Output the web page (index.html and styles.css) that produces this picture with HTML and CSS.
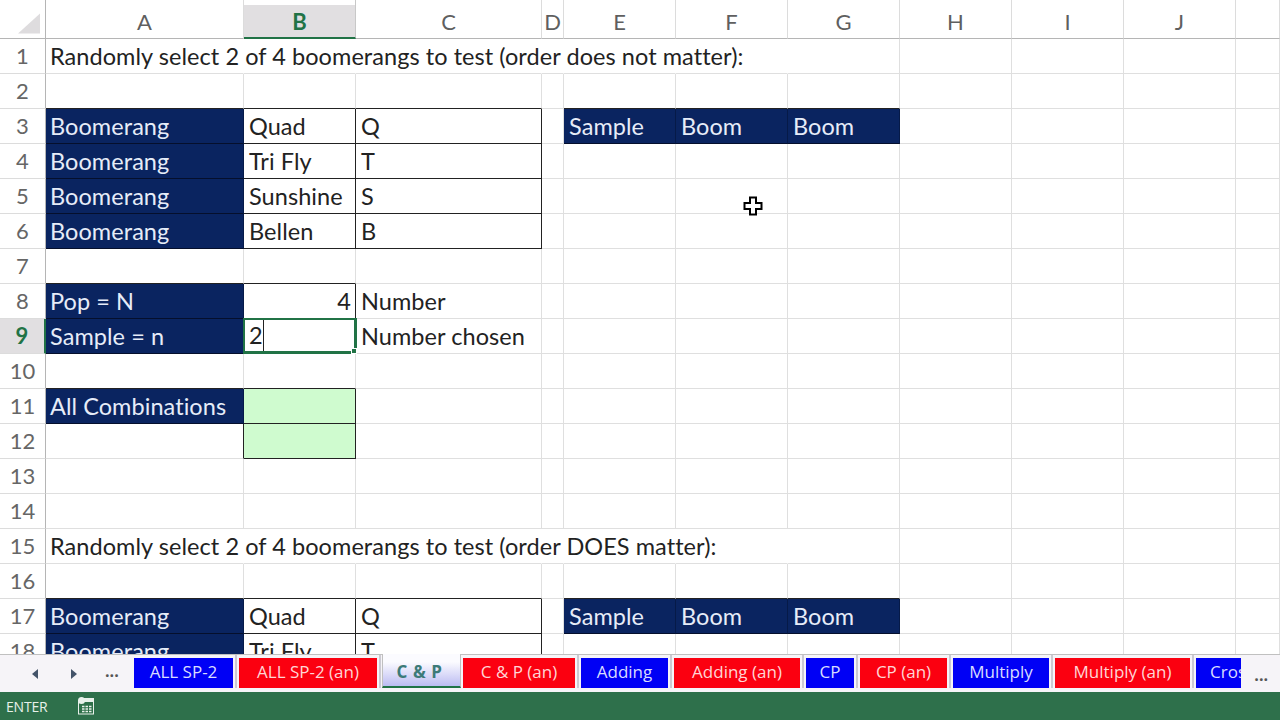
FILE: index.html
```html
<!DOCTYPE html>
<html lang="en">
<head>
<meta charset="utf-8">
<title>C &amp; P</title>
<link rel="stylesheet" href="styles.css">
</head>
<body>
<div class="app">
  <div class="sheet">
    <div class="row head-row">
      <div class="corner"><svg class="corner-mark" viewBox="0 0 24 22"><polygon points="24,0 24,22 0,22" /></svg></div>
      <div class="col">A</div><div class="col col-sel">B</div><div class="col">C</div><div class="col">D</div><div class="col">E</div><div class="col">F</div><div class="col">G</div><div class="col">H</div><div class="col">I</div><div class="col">J</div><div class="col"></div>
    </div>

    <div class="row">
      <div class="rh">1</div>
      <div class="c ca c-nr"><span class="overflow">Randomly select 2 of 4 boomerangs to test (order does not matter):</span></div><div class="c c-nr"></div><div class="c c-nr"></div><div class="c c-nr"></div><div class="c c-nr"></div><div class="c c-nr"></div><div class="c"></div><div class="c"></div><div class="c"></div><div class="c"></div><div class="c"></div>
    </div>
    <div class="row">
      <div class="rh">2</div>
      <div class="c b-b"></div><div class="c b-b"></div><div class="c b-b"></div><div class="c"></div><div class="c b-b"></div><div class="c b-b"></div><div class="c b-b"></div><div class="c"></div><div class="c"></div><div class="c"></div><div class="c"></div>
    </div>
    <div class="row">
      <div class="rh">3</div>
      <div class="c ca navy">Boomerang</div><div class="c box">Quad</div><div class="c box">Q</div><div class="c"></div><div class="c navy">Sample</div><div class="c navy">Boom</div><div class="c navy">Boom</div><div class="c"></div><div class="c"></div><div class="c"></div><div class="c"></div>
    </div>
    <div class="row">
      <div class="rh">4</div>
      <div class="c ca navy">Boomerang</div><div class="c box">Tri Fly</div><div class="c box">T</div><div class="c"></div><div class="c"></div><div class="c"></div><div class="c"></div><div class="c"></div><div class="c"></div><div class="c"></div><div class="c"></div>
    </div>
    <div class="row">
      <div class="rh">5</div>
      <div class="c ca navy">Boomerang</div><div class="c box">Sunshine</div><div class="c box">S</div><div class="c"></div><div class="c"></div><div class="c"></div><div class="c"></div><div class="c"></div><div class="c"></div><div class="c"></div><div class="c"></div>
    </div>
    <div class="row">
      <div class="rh">6</div>
      <div class="c ca navy">Boomerang</div><div class="c box">Bellen</div><div class="c box">B</div><div class="c"></div><div class="c"></div><div class="c"></div><div class="c"></div><div class="c"></div><div class="c"></div><div class="c"></div><div class="c"></div>
    </div>
    <div class="row">
      <div class="rh">7</div>
      <div class="c b-b"></div><div class="c b-b"></div><div class="c"></div><div class="c"></div><div class="c"></div><div class="c"></div><div class="c"></div><div class="c"></div><div class="c"></div><div class="c"></div><div class="c"></div>
    </div>
    <div class="row">
      <div class="rh">8</div>
      <div class="c ca navy">Pop = N</div><div class="c box num">4</div><div class="c">Number</div><div class="c"></div><div class="c"></div><div class="c"></div><div class="c"></div><div class="c"></div><div class="c"></div><div class="c"></div><div class="c"></div>
    </div>
    <div class="row">
      <div class="rh rh-sel">9</div>
      <div class="c ca navy">Sample = n</div><div class="c active"><span class="entry">2</span><span class="handle"></span></div><div class="c">Number chosen</div><div class="c"></div><div class="c"></div><div class="c"></div><div class="c"></div><div class="c"></div><div class="c"></div><div class="c"></div><div class="c"></div>
    </div>
    <div class="row">
      <div class="rh">10</div>
      <div class="c b-b"></div><div class="c b-b"></div><div class="c"></div><div class="c"></div><div class="c"></div><div class="c"></div><div class="c"></div><div class="c"></div><div class="c"></div><div class="c"></div><div class="c"></div>
    </div>
    <div class="row">
      <div class="rh">11</div>
      <div class="c ca navy">All Combinations</div><div class="c box mint"></div><div class="c"></div><div class="c"></div><div class="c"></div><div class="c"></div><div class="c"></div><div class="c"></div><div class="c"></div><div class="c"></div><div class="c"></div>
    </div>
    <div class="row">
      <div class="rh">12</div>
      <div class="c b-r"></div><div class="c box mint"></div><div class="c"></div><div class="c"></div><div class="c"></div><div class="c"></div><div class="c"></div><div class="c"></div><div class="c"></div><div class="c"></div><div class="c"></div>
    </div>
    <div class="row">
      <div class="rh">13</div>
      <div class="c"></div><div class="c"></div><div class="c"></div><div class="c"></div><div class="c"></div><div class="c"></div><div class="c"></div><div class="c"></div><div class="c"></div><div class="c"></div><div class="c"></div>
    </div>
    <div class="row">
      <div class="rh">14</div>
      <div class="c"></div><div class="c"></div><div class="c"></div><div class="c"></div><div class="c"></div><div class="c"></div><div class="c"></div><div class="c"></div><div class="c"></div><div class="c"></div><div class="c"></div>
    </div>
    <div class="row">
      <div class="rh">15</div>
      <div class="c ca c-nr"><span class="overflow">Randomly select 2 of 4 boomerangs to test (order DOES matter):</span></div><div class="c c-nr"></div><div class="c c-nr"></div><div class="c c-nr"></div><div class="c c-nr"></div><div class="c c-nr"></div><div class="c"></div><div class="c"></div><div class="c"></div><div class="c"></div><div class="c"></div>
    </div>
    <div class="row">
      <div class="rh">16</div>
      <div class="c b-b"></div><div class="c b-b"></div><div class="c b-b"></div><div class="c"></div><div class="c b-b"></div><div class="c b-b"></div><div class="c b-b"></div><div class="c"></div><div class="c"></div><div class="c"></div><div class="c"></div>
    </div>
    <div class="row">
      <div class="rh">17</div>
      <div class="c ca navy">Boomerang</div><div class="c box">Quad</div><div class="c box">Q</div><div class="c"></div><div class="c navy">Sample</div><div class="c navy">Boom</div><div class="c navy">Boom</div><div class="c"></div><div class="c"></div><div class="c"></div><div class="c"></div>
    </div>
    <div class="row">
      <div class="rh">18</div>
      <div class="c ca navy">Boomerang</div><div class="c box">Tri Fly</div><div class="c box">T</div><div class="c"></div><div class="c"></div><div class="c"></div><div class="c"></div><div class="c"></div><div class="c"></div><div class="c"></div><div class="c"></div>
    </div>

    <svg class="cursor" viewBox="0 0 20 20"><path d="M7 1.500h6v5.500h5.500v6H13v5.500H7V13H1.500V7H7z"/></svg>
  </div>

  <div class="tabbar">
    <div class="tabnav">
      <svg class="arrow" viewBox="0 0 8 12"><polygon points="7,1 7,11 1,6"/></svg>
      <svg class="arrow" viewBox="0 0 8 12"><polygon points="1,1 1,11 7,6"/></svg>
      <span class="dots">...</span>
    </div>
    <div class="tabs">
      <div class="tab blue tab-all">ALL SP-2</div>
      <div class="tab red tab-all-an">ALL SP-2 (an)</div>
      <div class="tab current">C &amp; P</div>
      <div class="tab red tab-cp-an">C &amp; P (an)</div>
      <div class="tab blue tab-add">Adding</div>
      <div class="tab red tab-add-an">Adding (an)</div>
      <div class="tab blue tab-c">CP</div>
      <div class="tab red tab-c-an">CP (an)</div>
      <div class="tab blue tab-mul">Multiply</div>
      <div class="tab red tab-mul-an">Multiply (an)</div>
      <div class="tab blue tab-cross">Cross</div>
    </div>
    <span class="dots dots-end">...</span>
  </div>

  <div class="status">
    <span class="mode">ENTER</span>
    <svg class="macro" viewBox="0 0 18 18">
      <rect x="1.500" y="3.500" width="15" height="13.500" fill="#2e7049" stroke="#e8f0ea"/>
      <rect x="6" y="1" width="11" height="4" fill="#e8f0ea"/>
      <circle cx="4.500" cy="3.500" r="3.500" fill="#e8f0ea"/>
      <path d="M5 9.500h2.500M8.500 9.500h2.500M12 9.500h2.500M5 12h2.500M8.500 12h2.500M12 12h2.500M5 14.500h2.500M8.500 14.500h2.500M12 14.500h2.500" stroke="#e8f0ea" stroke-width="1.300"/>
    </svg>
  </div>
</div>
</body>
</html>
```
FILE: styles.css
```css
* { box-sizing: border-box; }
html, body { margin: 0; height: 100%; }
body { background: #fff; font-family: "Lato", "Liberation Sans", sans-serif; overflow: hidden; }

.app { width: 1280px; height: 720px; display: flex; flex-direction: column; }

.sheet { position: relative; height: 654px; overflow: hidden; flex: none; }

.row {
  display: grid;
  grid-template-columns: 46px 198px 112px 186px 22px 112px 112px 112px 112px 112px 112px 44px;
  height: 35px;
}
.head-row { height: 39px; }

.corner { display: flex; align-items: flex-end; justify-content: flex-end; padding: 0 5px 4px 0; border-right: 1px solid #b5b5b5; border-bottom: 1px solid #b5b5b5; }
.corner-mark { width: 22px; height: 21px; fill: #dedcde; }

.col {
  display: flex; align-items: center; justify-content: center;
  font-size: 22px; color: #5f5f5f; padding-top: 5px;
  border-bottom: 1px solid #b5b5b5;
  border-right: 1px solid #dcdcdc;
}
.col-sel {
  background: linear-gradient(#fff 5px, #e1dfe1 5px);
  color: #217346; font-weight: 700;
  border-bottom: 2px solid #217346;
  border-right-color: #c8c8c8;
}

.rh {
  display: flex; align-items: center; justify-content: center;
  font-size: 22px; color: #666; padding-bottom: 2px;
  border-right: 1px solid #b5b5b5;
  border-bottom: 1px solid #dcdcdc;
}
.rh-sel { background: #e1dfe1; color: #217346; font-weight: 700; border-right: 2px solid #217346; }

.c {
  position: relative;
  display: flex; align-items: center;
  padding: 0 0 1px 5px;
  font-size: 23.500px; letter-spacing: 0.060px; color: #222;
  white-space: nowrap;
  border-right: 1px solid #dfdfdf;
  border-bottom: 1px solid #dfdfdf;
}
.ca { padding-left: 4px; }
.c-nr { border-right-color: transparent; }
.overflow { position: relative; z-index: 1; }
.b-b { border-bottom-color: #222; }
.b-r { border-right-color: #222; }

.navy { background: #0a2460; color: #e6ecf8; border-right-color: #061a48; border-bottom: 1px solid #050f2c; }
.box { border-right: 1px solid #222; border-bottom: 1px solid #222; }
.num { justify-content: flex-end; padding: 0 4px 1px 0; }
.mint { background: #cffbcf; }

.active {
  border: 2px solid #217346; border-right-width: 3px; border-bottom-width: 3px;
  margin: -1px -1px 0 -1px;
  padding: 0 0 0 4px;
  background: #fff;
  z-index: 2;
}
.entry { border-right: 1.500px solid #222; height: 31px; line-height: 30px; }
.handle {
  position: absolute; right: -3px; bottom: -3px;
  width: 6px; height: 6px;
  background: #217346; border: 1px solid #fff;
}

.cursor {
  position: absolute; left: 743px; top: 196px;
  width: 20px; height: 20px;
  fill: #fff; stroke: #000; stroke-width: 2;
}

.tabbar {
  position: relative;
  height: 38px; flex: none;
  display: flex;
  background: #f6f4f8;
  border-top: 1px solid #c0c0c0;
  font-family: "Open Sans", "Liberation Sans", sans-serif;
}
.tabnav { width: 134px; display: flex; align-items: center; padding: 0 0 0 31px; flex: none; }
.arrow { width: 8px; height: 12px; fill: #44546a; margin-right: 31px; }
.dots { font-size: 16px; font-weight: 700; color: #555; line-height: 1; position: relative; top: -3px; left: -4px; }
.dots-end { position: absolute; left: auto; right: 12px; top: 12px; }

.tabs { display: flex; height: 35px; margin-top: -1px; width: 1107px; overflow: hidden; flex: none; font-size: 17px; }
.tab {
  position: relative;
  display: flex; align-items: center; justify-content: center;
  flex: none; height: 30px;
  margin: 4px 6px 0 0;
  padding-bottom: 4px;
  white-space: nowrap;
  color: #d8dcff;
}
.tab::after {
  content: "";
  position: absolute; right: -4px; top: -3px; bottom: 0;
  width: 2px; background: #cbcad2;
}
.tab.current::after { display: none; }
.blue { background: #0000f5; }
.red { background: #fb0010; color: #ffd5d5; }
.tab.current {
  height: 34px; margin: 0 2px 0 -1px;
  padding: 2px 4px 0 0;
  background: linear-gradient(#fbfbff 25%, #bcbcf2);
  color: #3c7a78; font-weight: 700; letter-spacing: 0.600px;
  border-left: 1px solid #c0c0c0;
  border-right: 1px solid #c0c0c0;
  border-bottom: 2px solid #217346;
}
.tab-all { width: 99px; }
.tab-all-an { width: 138px; }
.tab.current { width: 79px; }
.tab-cp-an { width: 112px; }
.tab-add { width: 87px; }
.tab-add-an { width: 126px; }
.tab-c { width: 48px; }
.tab-c-an { width: 87px; }
.tab-mul { width: 96px; }
.tab-mul-an { width: 135px; }
.tab-cross { width: 100px; justify-content: flex-start; padding-left: 14px; }

.status {
  flex: 1;
  background: #2e704b;
  display: flex; align-items: center;
  padding-left: 6px;
  color: #e8f0ea;
  font-family: "Open Sans", "Liberation Sans", sans-serif;
}
.mode { font-size: 14px; letter-spacing: -0.200px; width: 71px; }
.macro { width: 18px; height: 18px; }
```
